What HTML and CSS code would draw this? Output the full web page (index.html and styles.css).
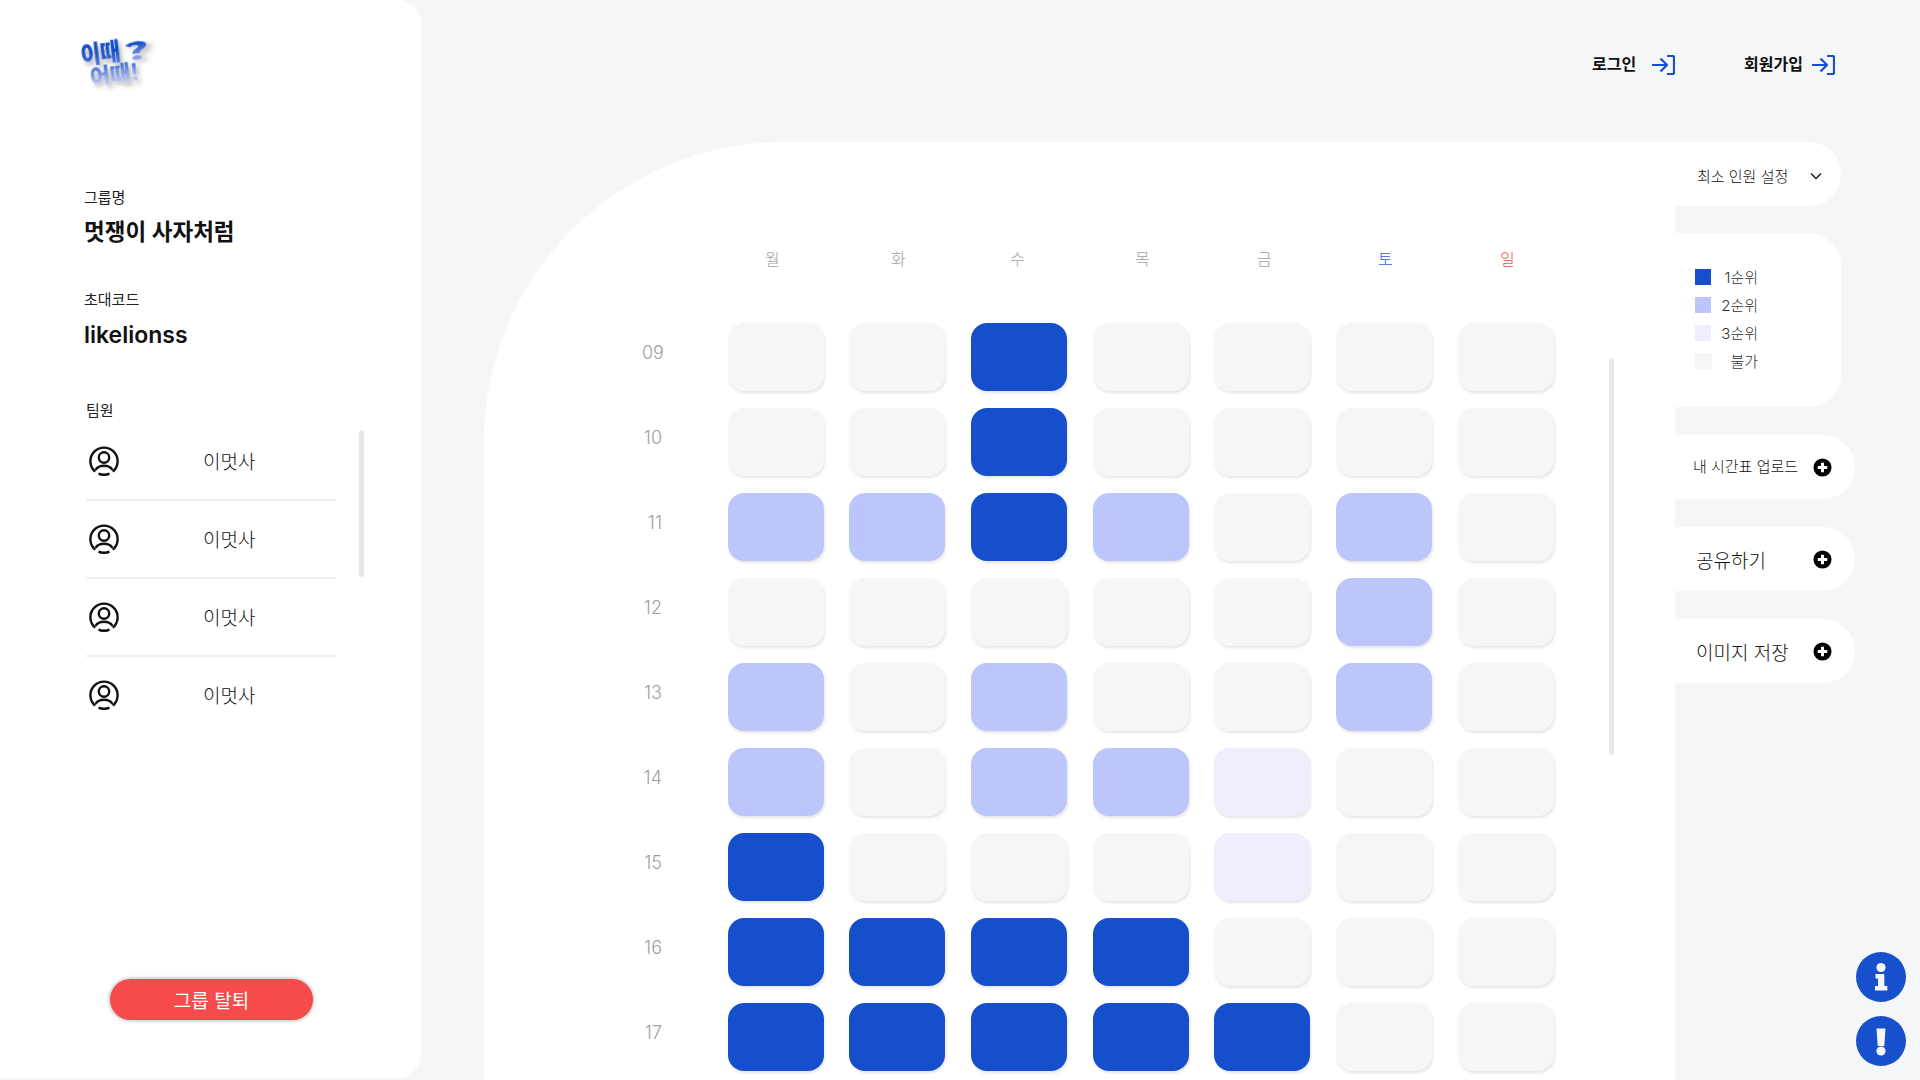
FILE: index.html
```html
<!DOCTYPE html>
<html lang="ko">
<head>
    <meta charset="utf-8">
    <title>이때어때 - 그룹 시간표</title>
    <link rel="stylesheet" href="styles.css">
</head>
<body>
    <aside class="sidebar">
        <div class="logo">
            <span class="logo-top">이때</span>
            <span class="logo-bottom">어때!</span>
            <span class="logo-mark">?</span>
        </div>

        <p class="field-label">그룹명</p>
        <p class="field-value">멋쟁이 사자처럼</p>

        <p class="field-label code-label">초대코드</p>
        <p class="field-value code-value">likelionss</p>

        <p class="team-label">팀원</p>
        <ul class="team-list">
            <li class="team-row">
                <svg class="user-icon" viewBox="0 0 30 30"><use href="#user"></use></svg>
                <span>이멋사</span>
            </li>
            <li class="team-row">
                <svg class="user-icon" viewBox="0 0 30 30"><use href="#user"></use></svg>
                <span>이멋사</span>
            </li>
            <li class="team-row">
                <svg class="user-icon" viewBox="0 0 30 30"><use href="#user"></use></svg>
                <span>이멋사</span>
            </li>
            <li class="team-row">
                <svg class="user-icon" viewBox="0 0 30 30"><use href="#user"></use></svg>
                <span>이멋사</span>
            </li>
        </ul>
        <div class="team-scroll"></div>

        <button type="button" class="leave-btn">그룹 탈퇴</button>
    </aside>

    <main class="content">
        <header class="topbar">
            <a class="top-link login-link">로그인
                <svg class="enter-icon" viewBox="0 0 23 20"><use href="#enter"></use></svg>
            </a>
            <a class="top-link">회원가입
                <svg class="enter-icon" viewBox="0 0 23 20"><use href="#enter"></use></svg>
            </a>
        </header>

        <div class="board">
            <section class="panel">
                <div class="days">
                    <span>월</span><span>화</span><span>수</span><span>목</span><span>금</span>
                    <span class="sat">토</span><span class="sun">일</span>
                </div>
                <div class="timetable">
                    <span class="hour">09</span>
                    <i class="cell"></i><i class="cell"></i><i class="cell first"></i><i class="cell"></i><i class="cell"></i><i class="cell"></i><i class="cell"></i>
                    <span class="hour">10</span>
                    <i class="cell"></i><i class="cell"></i><i class="cell first"></i><i class="cell"></i><i class="cell"></i><i class="cell"></i><i class="cell"></i>
                    <span class="hour">11</span>
                    <i class="cell second"></i><i class="cell second"></i><i class="cell first"></i><i class="cell second"></i><i class="cell"></i><i class="cell second"></i><i class="cell"></i>
                    <span class="hour">12</span>
                    <i class="cell"></i><i class="cell"></i><i class="cell"></i><i class="cell"></i><i class="cell"></i><i class="cell second"></i><i class="cell"></i>
                    <span class="hour">13</span>
                    <i class="cell second"></i><i class="cell"></i><i class="cell second"></i><i class="cell"></i><i class="cell"></i><i class="cell second"></i><i class="cell"></i>
                    <span class="hour">14</span>
                    <i class="cell second"></i><i class="cell"></i><i class="cell second"></i><i class="cell second"></i><i class="cell third"></i><i class="cell"></i><i class="cell"></i>
                    <span class="hour">15</span>
                    <i class="cell first"></i><i class="cell"></i><i class="cell"></i><i class="cell"></i><i class="cell third"></i><i class="cell"></i><i class="cell"></i>
                    <span class="hour">16</span>
                    <i class="cell first"></i><i class="cell first"></i><i class="cell first"></i><i class="cell first"></i><i class="cell"></i><i class="cell"></i><i class="cell"></i>
                    <span class="hour">17</span>
                    <i class="cell first"></i><i class="cell first"></i><i class="cell first"></i><i class="cell first"></i><i class="cell first"></i><i class="cell"></i><i class="cell"></i>
                </div>
                <div class="grid-scroll"></div>
            </section>

            <div class="tools">
                <div class="min-select">
                    <span>최소 인원 설정</span>
                    <svg class="chevron" viewBox="0 0 12 8"><path d="M1 1.5l5 5 5-5"></path></svg>
                </div>

                <div class="legend">
                    <div class="legend-row"><i class="swatch first"></i><span>1순위</span></div>
                    <div class="legend-row"><i class="swatch second"></i><span>2순위</span></div>
                    <div class="legend-row"><i class="swatch third"></i><span>3순위</span></div>
                    <div class="legend-row"><i class="swatch none"></i><span>불가</span></div>
                </div>

                <button type="button" class="tool-btn small">내 시간표 업로드
                    <svg class="plus-icon" viewBox="0 0 20 20"><use href="#plus"></use></svg>
                </button>
                <button type="button" class="tool-btn">공유하기
                    <svg class="plus-icon" viewBox="0 0 20 20"><use href="#plus"></use></svg>
                </button>
                <button type="button" class="tool-btn">이미지 저장
                    <svg class="plus-icon" viewBox="0 0 20 20"><use href="#plus"></use></svg>
                </button>
            </div>
        </div>
    </main>

    <div class="float-btns">
        <button type="button" class="round-btn">
            <svg viewBox="0 0 50 50"><circle cx="25" cy="15.5" r="4.6"></circle><path d="M19.500 22h8.800v12h3v4.500h-12.300V34h3v-7.500h-2.500z"></path></svg>
        </button>
        <button type="button" class="round-btn">
            <svg viewBox="0 0 50 50"><path d="M20.500 12.500h9l-1.200 17.500h-6.600z"></path><circle cx="25" cy="35" r="4.600"></circle></svg>
        </button>
    </div>

    <svg class="sprites">
        <symbol id="user" viewBox="0 0 30 30">
            <g fill="none" stroke="#111" stroke-width="2.400">
                <path d="M6.300 25.700A13.600 13.600 0 1 1 23.700 25.700"></path>
                <path d="M9.500 27.600A13.600 13.600 0 0 0 20.500 27.600"></path>
                <circle cx="15" cy="11.500" r="5.200"></circle>
                <path d="M6.500 23.800C8.500 20.800 11.500 19.800 15 19.800S21.500 20.800 23.500 23.800"></path>
            </g>
        </symbol>
        <symbol id="enter" viewBox="0 0 23 20">
            <g fill="none" stroke="#1650cc" stroke-width="2.200" stroke-linejoin="round">
                <path d="M0 10h14.500M8.500 3.500L15 10l-6.500 6.500"></path>
                <path d="M15 1h5.500a1.500 1.500 0 0 1 1.500 1.500v15a1.500 1.500 0 0 1-1.500 1.500H15"></path>
            </g>
        </symbol>
        <symbol id="plus" viewBox="0 0 20 20">
            <circle cx="10" cy="10" r="9.500" fill="#000"></circle>
            <path d="M10 5v10M5 10h10" stroke="#fff" stroke-width="3.200"></path>
        </symbol>
    </svg>
</body>
</html>
```

FILE: styles.css
```css
* {
    box-sizing: border-box;
}
html, body {
    height: 100%;
}
body {
    display: flex;
    height: 1080px;
    margin: 0;
    overflow: hidden;
    background-color: #f5f6f8;
    color: #111;
    font-family: Inter, 'Noto Sans CJK KR', sans-serif;
}
p, ul {
    margin: 0;
    padding: 0;
}
button {
    font-family: inherit;
    border: none;
    cursor: pointer;
}
.sprites {
    display: none;
}

/* sidebar */
.sidebar {
    position: relative;
    flex: 0 0 421px;
    height: 1078px;
    padding: 0 0 0 84px;
    background: #fff;
    border-radius: 0 24px 24px 0;
}
.logo {
    position: relative;
    width: 72px;
    height: 188px;
    font-weight: 900;
    font-family: 'Noto Sans CJK KR', sans-serif;
    line-height: 1;
}
.logo span {
    position: absolute;
    color: transparent;
    -webkit-background-clip: text;
    background-clip: text;
    filter: drop-shadow(2px 3px 2px rgba(0, 0, 0, 0.3));
}
.logo-top {
    left: -2px;
    top: 42px;
    font-size: 20px;
    background-image: linear-gradient(180deg, #164fcb 50%, #4f78e0 100%);
    transform: rotate(-7deg) scale(1.08, 1.25);
}
.logo-bottom {
    left: 9px;
    top: 63px;
    font-size: 19px;
    background-image: linear-gradient(180deg, #3d6ad8 10%, #c5d0f8 100%);
    transform: rotate(-7deg) scale(1.16, 1.2);
}
.logo-mark {
    left: 46px;
    top: 38px;
    font-size: 24px;
    background-image: linear-gradient(180deg, #164fcb 20%, #a8bcf4 100%);
    transform: rotate(-10deg) scaleX(2);
}
.field-label {
    font-size: 15px;
    line-height: 20px;
    color: #222;
}
.field-value {
    margin-top: 7px;
    font-size: 22.500px;
    font-weight: 600;
    line-height: 34px;
    color: #111;
}
.code-label {
    margin-top: 41px;
}
.code-value {
    margin-top: 8px;
    font-size: 23px;
}
.team-label {
    margin: 49px 0 0 2px;
    font-size: 15px;
    line-height: 20px;
    color: #222;
}
.team-list {
    width: 251px;
    margin: 2px 0 0 2px;
    list-style: none;
}
.team-row {
    display: flex;
    align-items: center;
    height: 78px;
    padding-left: 3px;
    border-bottom: 2px solid #f0f0f0;
    font-size: 19px;
    font-weight: 300;
}
.team-row:last-child {
    border-bottom-color: transparent;
}
.team-row span {
    margin: -2px 0 0 84px;
}
.user-icon {
    width: 30px;
    height: 30px;
}
.team-scroll {
    position: absolute;
    left: 359px;
    top: 430px;
    width: 5px;
    height: 147px;
    background: #e8e8e8;
    border-radius: 3px;
}
.leave-btn {
    position: absolute;
    left: 110px;
    top: 979px;
    width: 203px;
    height: 41px;
    background: #f54b4b;
    color: #fff;
    font-size: 19px;
    border-radius: 21px;
    box-shadow: 0 0 4px rgba(0, 0, 0, 0.4);
}

/* top links */
.content {
    flex: 1;
    min-width: 0;
}
.topbar {
    display: flex;
    justify-content: flex-end;
    align-items: flex-start;
    height: 142px;
    padding: 53px 85px 0 0;
}
.top-link {
    display: flex;
    align-items: center;
    gap: 16px;
    font-size: 16px;
    font-weight: 700;
    line-height: 22px;
    color: #111;
}
.login-link {
    margin-right: 69px;
}
.top-link + .top-link {
    gap: 9px;
}
.enter-icon {
    width: 23px;
    height: 20px;
    margin-top: 2px;
}

/* timetable */
.board {
    display: flex;
    padding-left: 63px;
}
.panel {
    position: relative;
    flex: 0 0 1191px;
    height: 938px;
    padding: 0 0 0 158px;
    background: #fff;
    border-top-left-radius: 300px;
}
.days {
    display: grid;
    grid-template-columns: 126px 119px 125px 122px 121px 122px 16px;
    height: 181px;
    margin-left: 123px;
    padding-top: 104px;
    font-size: 16px;
    font-weight: 300;
    line-height: 26px;
    color: #a0a0a0;
}
.days .sat {
    color: #2f5fd6;
}
.days .sun {
    color: #f05050;
}
.timetable {
    display: grid;
    grid-template-columns: 60px repeat(7, 96px);
    grid-auto-rows: 68px;
    row-gap: 17px;
    column-gap: 25.700px;
}
.hour {
    padding: 17px 40px 0 0;
    font-size: 18px;
    font-weight: 300;
    line-height: 26px;
    text-align: right;
    color: #a0a0a0;
}
.cell {
    display: block;
    background: #f5f6f8;
    border-radius: 16px;
    box-shadow: 1px 2px 3px rgba(0, 0, 0, 0.1);
}
.cell.first, .swatch.first {
    background: #164fcb;
}
.cell.second, .swatch.second {
    background: #bdc6fb;
}
.cell.third, .swatch.third {
    background: #f0eefc;
}
.grid-scroll {
    position: absolute;
    left: 1125px;
    top: 216px;
    width: 5px;
    height: 397px;
    background: #e8e8e8;
    border-radius: 3px;
}

/* right tools */
.tools {
    flex: 0 0 180px;
}
.min-select {
    display: flex;
    align-items: center;
    width: 166px;
    height: 64px;
    padding: 3px 0 0 22px;
    background: #fff;
    border-radius: 0 32px 32px 0;
    font-size: 15px;
    font-weight: 300;
    color: #111;
}
.chevron {
    width: 12px;
    height: 8px;
    margin-left: 22px;
    fill: none;
    stroke: #222;
    stroke-width: 1.500;
}
.legend {
    display: flex;
    flex-direction: column;
    gap: 8px;
    width: 166px;
    height: 174px;
    margin-top: 27px;
    padding: 34px 0 0 20px;
    background: #fff;
    border-radius: 0 32px 32px 0;
}
.legend-row {
    display: flex;
    align-items: center;
    height: 20px;
    font-size: 15px;
    font-weight: 300;
    color: #333;
}
.legend-row span {
    width: 47px;
    margin-top: -2px;
    text-align: right;
}
.swatch {
    flex: 0 0 16px;
    height: 16px;
}
.swatch.none {
    background: #f5f6f8;
    flex-basis: 17px;
    margin-right: -1px;
}
.tool-btn {
    display: flex;
    align-items: center;
    justify-content: space-between;
    width: 180px;
    height: 64px;
    margin-top: 28px;
    padding: 0 23px 0 21px;
    background: #fff;
    color: #111;
    font-size: 19px;
    font-weight: 300;
    border-radius: 0 32px 32px 0;
}
.tool-btn.small {
    padding: 0 23px 3px 18px;
    font-size: 15px;
    font-weight: 300;
}
.tool-btn.small .plus-icon {
    margin-top: 4px;
}
.plus-icon {
    width: 19px;
    height: 19px;
}

/* floating help buttons */
.float-btns {
    position: fixed;
    right: 14px;
    bottom: 14px;
    display: flex;
    flex-direction: column;
    gap: 14px;
}
.round-btn {
    width: 50px;
    height: 50px;
    padding: 0;
    background: #1650cc;
    border-radius: 50%;
}
.round-btn svg {
    display: block;
    fill: #f5f6f8;
}
```
